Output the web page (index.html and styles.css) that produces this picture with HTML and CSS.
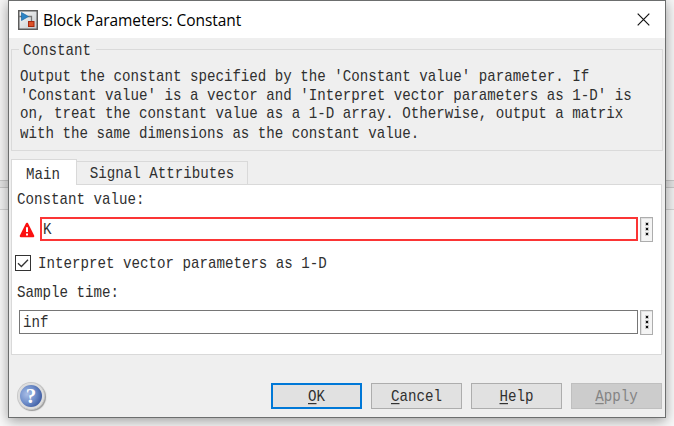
FILE: index.html
```html
<!DOCTYPE html>
<html lang="en">
<head>
<meta charset="utf-8">
<title>Block Parameters: Constant</title>
<link rel="stylesheet" href="styles.css">
</head>
<body>
<main class="dialog">
  <header class="titlebar">
    <svg class="app-icon" width="20" height="20" viewBox="0 0 20 20">
      <defs><linearGradient id="frame" x2="1" y2="1"><stop stop-color="#fafafa"/><stop offset="1" stop-color="#c4c8cc"/></linearGradient></defs>
      <rect x=".75" y=".75" width="18.5" height="18.5" fill="url(#frame)" stroke="#5d5d5d" stroke-width="1.5"/>
      <path d="M1 6.5h3M10 6.5h3.5v6" fill="none" stroke="#777" stroke-width="1.3"/>
      <path d="M3.5 2.5v8L10.5 6.5z" fill="#2c83c5" stroke="#1664a1" stroke-width=".7"/>
      <rect x="10.5" y="11.5" width="5.5" height="5" fill="#dc5128" stroke="#a5280f"/>
    </svg>
    <h1 class="title">Block Parameters: Constant</h1>
    <svg class="close" width="13" height="13" viewBox="0 0 13 13"><path d="M.7.7l11.6 11.6M12.3.7L.7 12.3" stroke="#111" stroke-width="1.2"/></svg>
  </header>
  <section class="group">
    <h2 class="legend"><span class="t">Constant</span></h2>
    <p class="t description">Output the constant specified by the 'Constant value' parameter. If<br>'Constant value' is a vector and 'Interpret vector parameters as 1-D' is<br>on, treat the constant value as a 1-D array. Otherwise, output a matrix<br>with the same dimensions as the constant value.</p>
  </section>
  <nav class="tabs">
    <div class="tab active"><span class="t">Main</span></div>
    <div class="tab"><span class="t">Signal Attributes</span></div>
  </nav>
  <section class="panel">
    <label class="label"><span class="t">Constant value:</span></label>
    <div class="row">
      <svg class="warning" width="16" height="16" viewBox="0 0 16 16"><path d="M8 2L14 14H2z" fill="#fb1111" stroke="#fb1111" stroke-width="2.6" stroke-linejoin="round"/><path d="M8 5.3v4.6M8 11.6v2" stroke="#fff" stroke-width="2"/></svg>
      <div class="input invalid"><span class="t">K</span></div>
      <div class="more"><svg width="4" height="15" viewBox="0 0 4 15"><path d="M0 0h4v4H0zM0 5h4v4H0zM0 10h4v4H0z" fill="#ccc"/><path d="M1 1h2v2H1zM1 6h2v2H1zM1 11h2v2H1z" fill="#111"/></svg></div>
    </div>
    <div class="check">
      <svg width="16" height="16" viewBox="0 0 16 16"><rect x=".5" y=".5" width="15" height="15" fill="#fff" stroke="#333"/><path d="M3 8.2l3.4 3.3L13 4.8" fill="none" stroke="#333" stroke-width="1.3"/></svg>
      <span class="t">Interpret vector parameters as 1-D</span>
    </div>
    <label class="label"><span class="t">Sample time:</span></label>
    <div class="row sample">
      <div class="input"><span class="t">inf</span></div>
      <div class="more"><svg width="4" height="15" viewBox="0 0 4 15"><path d="M0 0h4v4H0zM0 5h4v4H0zM0 10h4v4H0z" fill="#ccc"/><path d="M1 1h2v2H1zM1 6h2v2H1zM1 11h2v2H1z" fill="#111"/></svg></div>
    </div>
  </section>
  <footer class="footer">
    <div class="help"><span>?</span></div>
    <div class="button primary"><span class="t"><u>O</u>K</span></div>
    <div class="button"><span class="t"><u>C</u>ancel</span></div>
    <div class="button"><span class="t"><u>H</u>elp</span></div>
    <div class="button disabled"><span class="t"><u>A</u>pply</span></div>
  </footer>
</main>
</body>
</html>
```
FILE: styles.css
```css
* { box-sizing: border-box; }
svg { display: block; flex: none; }
body {
  margin: 0;
  height: 426px;
  padding-left: 8px;
  overflow: hidden;
  background: linear-gradient(#f6f6f6 0 180px, #c8c8c8 180px 181px, #e4e4e4 181px 187px, #c8c8c8 187px 188px, #f2f2f2 188px 209px, #d4d4d4 209px 210px, #f9f9f9 210px);
}
.dialog {
  width: 658px;
  height: 418px;
  border: 1px solid #6c6e6e;
  background: #efefef;
  box-shadow: 0 3px 12px rgba(0, 0, 0, .38);
  color: #303030;
  font-family: "Liberation Mono", monospace;
  font-size: 14.167px;
}
/* Tall, narrow half-width lettering */
.t {
  display: inline-block;
  line-height: 16px;
  white-space: pre;
  transform: scaleY(1.17);
}
.titlebar { display: flex; align-items: center; height: 37px; padding: 0 15px 0 9px; background: #fff; }
.title {
  flex: 1;
  margin: 0 0 0 5px;
  color: #000;
  font: 400 15.5px/20px "Open Sans", "Noto Sans", sans-serif;
  letter-spacing: -.07px;
}
.group { width: 652px; height: 102px; margin: 11px 0 0 2px; border: 1px solid #dadada; }
.legend {
  width: 77px;
  height: 18px;
  margin: -9px 0 0 7px;
  padding-left: 4px;
  background: #efefef;
  font-size: inherit;
  font-weight: 400;
  line-height: 18px;
}
.description {
  height: 65px;
  margin: 8px 0 0 8px;
  line-height: 16.239px;
  transform-origin: 0 0;
}
.tabs { display: flex; align-items: flex-end; height: 26px; margin: 8px 0 0 2px; }
.tab {
  display: flex;
  align-items: center;
  justify-content: center;
  width: 171px;
  height: 24px;
  border: 1px solid #d9d9d9;
  border-left: 0;
}
.tab.active {
  z-index: 1;
  width: 66px;
  height: 26px;
  padding: 2px 2px 0 0;
  border-left: 1px solid #d9d9d9;
  border-bottom: 0;
  background: #fff;
}
.panel {
  width: 651px;
  height: 171px;
  margin: -1px 0 0 2px;
  padding: 5px 8px 0 3px;
  border: 1px solid #d9d9d9;
  background: #fff;
}
.label { display: flex; align-items: center; height: 18px; padding-left: 2px; }
.row { display: flex; align-items: flex-start; height: 25px; margin-top: 9px; padding-left: 4px; }
.warning { margin: 5px 5px 0 0; }
.input {
  display: flex;
  flex: 1;
  align-items: center;
  height: 24px;
  padding-left: 3px;
  border: 1px solid #767676;
}
.input.invalid { padding-left: 1px; border: 2px solid #fb3535; }
.more {
  display: flex;
  align-items: center;
  justify-content: center;
  width: 13px;
  height: 25px;
  margin-left: 2px;
  border: 1px solid #adadad;
  background: #f4f4f4;
  box-shadow: inset 1px 1px #e1e1e1;
}
.check { display: flex; gap: 7px; height: 16px; margin: 13px 0 12px; }
.sample { margin-top: 9px; }
.footer { display: flex; align-items: flex-start; gap: 9px; margin: 28px 0 0 9px; }
.help {
  display: flex;
  align-items: center;
  justify-content: center;
  width: 26px;
  height: 26px;
  margin-right: 218px;
  border: 2px solid #ddd;
  border-radius: 50%;
  background: radial-gradient(circle at 32% 42%, #a9bde6 0, #6e8dc9 45%, #2f4b94 90%);
  box-shadow: 0 0 0 1px #c9c9c9, 1px 1px 1px 1px #999;
  color: #fff;
  font: 700 21px/22px "Liberation Serif", serif;
}
.button {
  display: flex;
  align-items: center;
  justify-content: center;
  width: 91px;
  height: 26px;
  border: 1px solid #adadad;
  background: #e1e1e1;
}
.button.primary { border: 2px solid #0078d7; }
.button.disabled { border-color: #bfbfbf; background: #ccc; color: #848484; }
u { text-decoration-thickness: 1px; text-underline-offset: 2px; }
```
